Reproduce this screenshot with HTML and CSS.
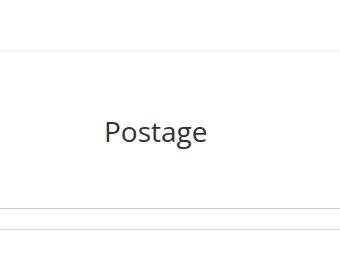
FILE: index.html
```html
<!DOCTYPE html>
<html lang="en">
<head>
  <meta charset="UTF-8" />
  <title>Postage</title>
  <link rel="stylesheet" href="styles.css">
</head>
<body>
  <div class="top-bar"></div>

  <div class="content">
    <div class="label">Postage</div>
  </div>

  <div class="footer-row"></div>
</body>
</html>
```

FILE: styles.css
```css
body {
  margin: 0;
  padding: 0;
  background: #fff;
  font-family: "Open Sans", "Noto Sans", sans-serif;
  color: #333;
}

.top-bar {
  height: 51px;
  border-bottom: 1px solid #e8e8e8;
}

.content {
  height: 156px;
  display: flex;
  align-items: center;
  padding-left: 104px;
  border-bottom: 1px solid #cfcfcf;
}

.label {
  font-size: 28px;
  line-height: 1;
  margin-top: 2px;
}

.footer-row {
  height: 20px;
  border-bottom: 1px solid #dedede;
}
```
